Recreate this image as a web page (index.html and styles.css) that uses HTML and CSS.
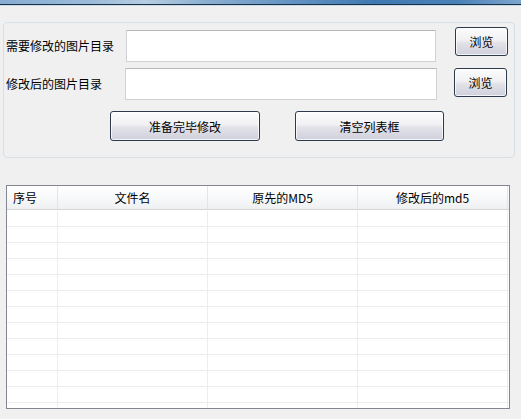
FILE: index.html
```html
<!DOCTYPE html>
<html lang="zh-CN">
<head>
<meta charset="utf-8">
<title>图片MD5修改</title>
<link rel="stylesheet" href="styles.css">
</head>
<body>
<div class="titlebar"></div>
<div class="group">
  <div class="row row-first">
    <label class="label">需要修改的图片目录</label>
    <input class="input" type="text">
    <button class="btn browse">浏览</button>
  </div>
  <div class="row row-second">
    <label class="label">修改后的图片目录</label>
    <input class="input input-wide" type="text">
    <button class="btn browse">浏览</button>
  </div>
  <div class="row row-actions">
    <button class="btn action">准备完毕修改</button>
    <button class="btn action action-clear">清空列表框</button>
  </div>
</div>
<div class="list">
  <div class="list-head">
    <div class="cell head-first">序号</div>
    <div class="cell">文件名</div>
    <div class="cell">原先的MD5</div>
    <div class="cell">修改后的md5</div>
  </div>
  <div class="list-body">
    <div class="list-row"><div class="cell"></div><div class="cell"></div><div class="cell"></div><div class="cell"></div></div>
    <div class="list-row"><div class="cell"></div><div class="cell"></div><div class="cell"></div><div class="cell"></div></div>
    <div class="list-row"><div class="cell"></div><div class="cell"></div><div class="cell"></div><div class="cell"></div></div>
    <div class="list-row"><div class="cell"></div><div class="cell"></div><div class="cell"></div><div class="cell"></div></div>
    <div class="list-row"><div class="cell"></div><div class="cell"></div><div class="cell"></div><div class="cell"></div></div>
    <div class="list-row"><div class="cell"></div><div class="cell"></div><div class="cell"></div><div class="cell"></div></div>
    <div class="list-row"><div class="cell"></div><div class="cell"></div><div class="cell"></div><div class="cell"></div></div>
    <div class="list-row"><div class="cell"></div><div class="cell"></div><div class="cell"></div><div class="cell"></div></div>
    <div class="list-row"><div class="cell"></div><div class="cell"></div><div class="cell"></div><div class="cell"></div></div>
    <div class="list-row"><div class="cell"></div><div class="cell"></div><div class="cell"></div><div class="cell"></div></div>
    <div class="list-row"><div class="cell"></div><div class="cell"></div><div class="cell"></div><div class="cell"></div></div>
    <div class="list-row"><div class="cell"></div><div class="cell"></div><div class="cell"></div><div class="cell"></div></div>
    <div class="list-row list-row-last"><div class="cell"></div><div class="cell"></div><div class="cell"></div><div class="cell"></div></div>
  </div>
</div>
</body>
</html>
```
FILE: styles.css
```css
html, body {
  margin: 0;
  padding: 0;
}
body {
  width: 521px;
  height: 419px;
  overflow: hidden;
  background: #f0f0f0;
  font-family: "Noto Sans CJK SC", "Noto Sans", sans-serif;
  font-size: 12px;
  color: #000;
}
.titlebar {
  height: 4px;
  background: linear-gradient(90deg, #86acd2 0%, #9cbcd9 18%, #b6cde2 28%, #8aaed0 40%, #5e90c0 58%, #3f79b1 72%, #4a82b8 88%, #7ea6cd 100%);
  border-bottom: 1px solid #1c3044;
  box-shadow: 0 1px 0 #c8dcec;
}
.group {
  box-sizing: border-box;
  height: 136px;
  margin: 17px 6px 0 3px;
  border: 1px solid #d5dfe5;
  border-radius: 4px;
  padding: 4px 0 0 2px;
}
.row {
  display: flex;
  align-items: flex-start;
}
.row-first {
  height: 35px;
}
.row-second {
  margin-top: 6px;
}
.label {
  width: 120px;
  line-height: 32px;
  height: 32px;
  white-space: nowrap;
}
.row-first .label,
.row-first .input {
  margin-top: 3px;
}
.input {
  box-sizing: border-box;
  width: 310px;
  height: 32px;
  margin: 0;
  padding: 0 3px;
  background: #fff;
  border: 1px solid #cfd1d5;
  border-top-color: #b5b8bd;
  border-radius: 0;
  outline: none;
  font: inherit;
}
.input-wide {
  width: 312px;
  margin-left: -1px;
}
.btn {
  box-sizing: border-box;
  margin: 0;
  padding: 0;
  font: inherit;
  color: #000;
  border: 1px solid #2e3b4b;
  border-radius: 3px;
  background: linear-gradient(#fcfcfd 0%, #f1f1f4 45%, #e2e2e9 55%, #cfd0dc 100%);
  box-shadow: inset 0 0 0 1px rgba(255, 255, 255, 0.75);
  cursor: default;
}
.browse {
  width: 53px;
  height: 29px;
  margin-left: 19px;
}
.row-second .browse {
  margin-left: 17px;
}
.row-actions {
  margin-top: 11px;
  padding-left: 104px;
}
.action {
  width: 150px;
  height: 30px;
}
.action-clear {
  width: 149px;
  margin-left: 35px;
}
.list {
  box-sizing: border-box;
  width: 504px;
  height: 224px;
  margin: 27px 0 0 6px;
  border: 1px solid #828790;
  background: #fff;
  overflow: hidden;
}
.list-head,
.list-row {
  display: grid;
  grid-template-columns: 51px 150px 150px 150px;
}
.list-head {
  height: 23px;
  border-bottom: 1px solid #d5d5d5;
  background: linear-gradient(#ffffff 0%, #f8f9fa 50%, #eef0f2 100%);
}
.list-head .cell {
  line-height: 23px;
  text-align: center;
  border-right: 1px solid #e3e5e8;
  white-space: nowrap;
}
.list-head .head-first {
  text-align: left;
  padding-left: 6px;
}
.list-body {
  padding-top: 1px;
}
.list-row {
  height: 15px;
  border-bottom: 1px solid #ececec;
}
.list-row .cell {
  border-right: 1px solid #ededed;
}
.list-row-last {
  border-bottom: none;
}
.cell {
  box-sizing: border-box;
  min-width: 0;
}
```
